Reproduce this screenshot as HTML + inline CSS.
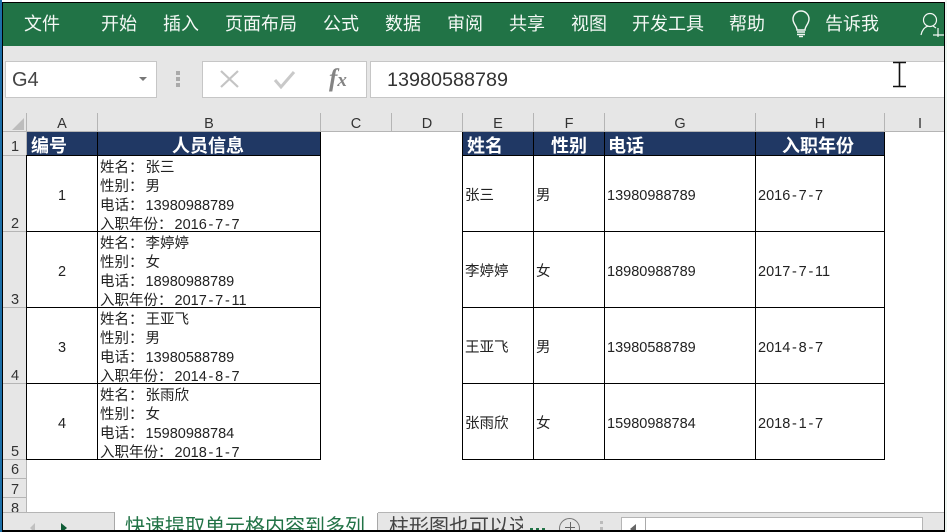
<!DOCTYPE html>
<html><head><meta charset="utf-8"><style>
html,body{margin:0;padding:0;background:#fff}
#p{position:relative;width:947px;height:532px;overflow:hidden;background:#fff;font-family:"Liberation Sans","Noto Sans CJK SC",sans-serif;color:#222}
.t{position:absolute;white-space:nowrap;line-height:20px}
.b{position:absolute}
.r{color:#f4f8f5;font-size:18px;top:13px;line-height:22px}
.h{color:#fff;font-size:18px;font-weight:bold;top:135px;line-height:22px}
.c{font-size:14.5px;line-height:19px;color:#222}
.c i{font-style:normal;padding:0 1.750px}
.c u{text-decoration:none;display:inline-block;width:2px;height:1px}
.l{position:absolute;background:#000}
.ch{font-size:14.5px;top:115px;line-height:18px;text-align:center;color:#333}
.rh{font-size:14.5px;left:4px;width:22px;text-align:center;line-height:18px;color:#333}
.g{position:absolute;background:#b5b5b5}
</style></head><body><div id="p">
<div class="b" style="left:0;top:0;width:947px;height:3px;background:#fff"></div>
<div class="b" style="left:3px;top:3px;width:941px;height:43px;background:#217346"></div>
<div class="b" style="left:3px;top:46px;width:941px;height:85px;background:#e6e6e6"></div>
<div class="t r" style="left:24px">文件</div>
<div class="t r" style="left:101px">开始</div>
<div class="t r" style="left:163px">插入</div>
<div class="t r" style="left:225px">页面布局</div>
<div class="t r" style="left:323px">公式</div>
<div class="t r" style="left:385px">数据</div>
<div class="t r" style="left:447px">审阅</div>
<div class="t r" style="left:509px">共享</div>
<div class="t r" style="left:571px">视图</div>
<div class="t r" style="left:632px">开发工具</div>
<div class="t r" style="left:729px">帮助</div>
<div class="t r" style="left:825px">告诉我</div>
<svg class="b" style="left:790px;top:10px" width="24" height="28" viewBox="0 0 24 28" fill="none" stroke="#f4f8f5" stroke-width="1.4"><path d="M7 20C7 16 3 14 3 9a8 8 0 0 1 16 0c0 5-4 7-4 11Z"/><path d="M7 22h8M7 24.500h8" /><path d="M9 26.500h4"/></svg>
<svg class="b" style="left:920px;top:11px" width="24" height="26" viewBox="0 0 24 26" fill="none" stroke="#f4f8f5" stroke-width="1.2"><circle cx="10" cy="9" r="6.500"/><path d="M1 24c1-5 4-8 7-9M13 15l3 2M18 17v11M13 24h11"/></svg>

<div class="b" style="left:5px;top:61px;width:150px;height:35px;background:#fff;border:1px solid #c6c6c6"></div>
<div class="t" style="left:12px;top:68px;font-size:20px;line-height:24px;color:#444">G4</div>
<div class="b" style="left:139px;top:77px;width:0;height:0;border:4px solid transparent;border-top:4px solid #777;border-bottom:0"></div>
<div class="b" style="left:176px;top:71px;width:4px;height:4px;background:#aaa"></div>
<div class="b" style="left:176px;top:77px;width:4px;height:4px;background:#aaa"></div>
<div class="b" style="left:176px;top:83px;width:4px;height:4px;background:#aaa"></div>
<div class="b" style="left:202px;top:61px;width:163px;height:35px;background:#fff;border:1px solid #c6c6c6"></div>
<svg class="b" style="left:218px;top:68px" width="24" height="22" fill="none" stroke="#c4c4c4" stroke-width="2.200"><path d="M3 3 20 19M20 3 3 19"/></svg>
<svg class="b" style="left:273px;top:70px" width="24" height="20" fill="none" stroke="#c9c9c9" stroke-width="3"><path d="M2 10l6 7L21 2"/></svg>
<div class="t" style="left:329px;top:66px;font-family:'Liberation Serif',serif;font-style:italic;font-weight:bold;font-size:25px;line-height:26px;color:#848484">f<span style="font-size:19px">x</span></div>
<div class="b" style="left:370px;top:61px;width:575px;height:35px;background:#fff;border-top:1px solid #c6c6c6;border-bottom:1px solid #c6c6c6;border-left:1px solid #c6c6c6"></div>
<div class="t" style="left:387px;top:68px;font-size:19.800px;line-height:24px;color:#333">13980588789</div>
<svg class="b" style="left:892px;top:61px" width="16" height="27" fill="none" stroke="#111" stroke-width="1.600"><path d="M1 1.500h13M1 25.500h13M7.500 2v23"/></svg>

<svg class="b" style="left:12px;top:117px" width="13" height="13"><path d="M12 1V13H0Z" fill="#bdbdbd"/></svg>
<div class="b" style="left:3px;top:131px;width:24px;height:381px;background:#e6e6e6"></div>
<div class="g" style="left:3px;top:131px;width:941px;height:1px"></div>
<div class="g" style="left:26px;top:113px;width:1px;height:399px"></div>
<div class="g" style="left:97px;top:113px;width:1px;height:18px"></div>
<div class="g" style="left:320px;top:113px;width:1px;height:18px"></div>
<div class="g" style="left:391px;top:113px;width:1px;height:18px"></div>
<div class="g" style="left:462px;top:113px;width:1px;height:18px"></div>
<div class="g" style="left:533px;top:113px;width:1px;height:18px"></div>
<div class="g" style="left:604px;top:113px;width:1px;height:18px"></div>
<div class="g" style="left:755px;top:113px;width:1px;height:18px"></div>
<div class="g" style="left:884px;top:113px;width:1px;height:18px"></div>
<div class="t ch" style="left:27px;width:70px">A</div>
<div class="t ch" style="left:98px;width:222px">B</div>
<div class="t ch" style="left:321px;width:70px">C</div>
<div class="t ch" style="left:392px;width:70px">D</div>
<div class="t ch" style="left:463px;width:70px">E</div>
<div class="t ch" style="left:534px;width:70px">F</div>
<div class="t ch" style="left:605px;width:150px">G</div>
<div class="t ch" style="left:756px;width:128px">H</div>
<div class="t ch" style="left:885px;width:70px">I</div>

<div class="g" style="left:3px;top:155px;width:24px;height:1px"></div>
<div class="g" style="left:3px;top:231px;width:24px;height:1px"></div>
<div class="g" style="left:3px;top:307px;width:24px;height:1px"></div>
<div class="g" style="left:3px;top:383px;width:24px;height:1px"></div>
<div class="g" style="left:3px;top:459px;width:24px;height:1px"></div>
<div class="g" style="left:3px;top:478px;width:24px;height:1px"></div>
<div class="g" style="left:3px;top:497px;width:24px;height:1px"></div>
<div class="t rh" style="top:138px">1</div>
<div class="t rh" style="top:215px">2</div>
<div class="t rh" style="top:291px">3</div>
<div class="t rh" style="top:367px">4</div>
<div class="t rh" style="top:443px">5</div>
<div class="t rh" style="top:461px">6</div>
<div class="t rh" style="top:481px">7</div>
<div class="t rh" style="top:500px">8</div>

<div class="b" style="left:27px;top:132px;width:293px;height:23px;background:#203864"></div>
<div class="b" style="left:463px;top:132px;width:421px;height:23px;background:#203864"></div>
<div class="l" style="left:27px;top:155px;width:294px;height:1px"></div>
<div class="l" style="left:27px;top:231px;width:294px;height:1px"></div>
<div class="l" style="left:27px;top:307px;width:294px;height:1px"></div>
<div class="l" style="left:27px;top:383px;width:294px;height:1px"></div>
<div class="l" style="left:27px;top:459px;width:294px;height:1px"></div>
<div class="l" style="left:97px;top:132px;width:1px;height:328px"></div>
<div class="l" style="left:320px;top:132px;width:1px;height:328px"></div>
<div class="l" style="left:26px;top:155px;width:1px;height:305px"></div>
<div class="l" style="left:462px;top:155px;width:423px;height:1px"></div>
<div class="l" style="left:462px;top:231px;width:423px;height:1px"></div>
<div class="l" style="left:462px;top:307px;width:423px;height:1px"></div>
<div class="l" style="left:462px;top:383px;width:423px;height:1px"></div>
<div class="l" style="left:462px;top:459px;width:423px;height:1px"></div>
<div class="l" style="left:462px;top:132px;width:1px;height:328px"></div>
<div class="l" style="left:533px;top:132px;width:1px;height:328px"></div>
<div class="l" style="left:604px;top:132px;width:1px;height:328px"></div>
<div class="l" style="left:755px;top:132px;width:1px;height:328px"></div>
<div class="l" style="left:884px;top:132px;width:1px;height:328px"></div>

<div class="t h" style="left:31px">编号</div>
<div class="t h" style="left:172px">人员信息</div>
<div class="t h" style="left:467px">姓名</div>
<div class="t h" style="left:551px">性别</div>
<div class="t h" style="left:608px">电话</div>
<div class="t h" style="left:782px">入职年份</div>

<div class="t c" style="left:27px;width:70px;text-align:center;top:187px">1</div>
<div class="t c" style="left:27px;width:70px;text-align:center;top:263px">2</div>
<div class="t c" style="left:27px;width:70px;text-align:center;top:339px">3</div>
<div class="t c" style="left:27px;width:70px;text-align:center;top:415px">4</div>

<div class="t c" style="left:100px;top:159px">姓名：<u></u>张三<br>性别：<u></u>男<br>电话：<u></u>13980988789<br>入职年份：<u></u>2016<i>-</i>7<i>-</i>7</div>
<div class="t c" style="left:100px;top:235px">姓名：<u></u>李婷婷<br>性别：<u></u>女<br>电话：<u></u>18980988789<br>入职年份：<u></u>2017<i>-</i>7<i>-</i>11</div>
<div class="t c" style="left:100px;top:311px">姓名：<u></u>王亚飞<br>性别：<u></u>男<br>电话：<u></u>13980588789<br>入职年份：<u></u>2014<i>-</i>8<i>-</i>7</div>
<div class="t c" style="left:100px;top:387px">姓名：<u></u>张雨欣<br>性别：<u></u>女<br>电话：<u></u>15980988784<br>入职年份：<u></u>2018<i>-</i>1<i>-</i>7</div>

<div class="t c" style="left:465px;top:187px">张三</div>
<div class="t c" style="left:536px;top:187px">男</div>
<div class="t c" style="left:607px;top:187px">13980988789</div>
<div class="t c" style="left:758px;top:187px">2016<i>-</i>7<i>-</i>7</div>
<div class="t c" style="left:465px;top:263px">李婷婷</div>
<div class="t c" style="left:536px;top:263px">女</div>
<div class="t c" style="left:607px;top:263px">18980988789</div>
<div class="t c" style="left:758px;top:263px">2017<i>-</i>7<i>-</i>11</div>
<div class="t c" style="left:465px;top:339px">王亚飞</div>
<div class="t c" style="left:536px;top:339px">男</div>
<div class="t c" style="left:607px;top:339px">13980588789</div>
<div class="t c" style="left:758px;top:339px">2014<i>-</i>8<i>-</i>7</div>
<div class="t c" style="left:465px;top:415px">张雨欣</div>
<div class="t c" style="left:536px;top:415px">女</div>
<div class="t c" style="left:607px;top:415px">15980988784</div>
<div class="t c" style="left:758px;top:415px">2018<i>-</i>1<i>-</i>7</div>

<div class="b" style="left:3px;top:512px;width:941px;height:18px;background:#e6e6e6;border-top:1px solid #b5b5b5;box-sizing:border-box"></div>
<div class="b" style="left:114px;top:512px;width:263px;height:18px;background:#fff;border-left:1px solid #a8a8a8"></div>
<div class="b" style="left:377px;top:513px;width:146px;height:17px;background:#e6e6e6;border-left:1px solid #a8a8a8"></div>
<div class="t" style="left:125px;top:514px;font-size:20px;line-height:26px;color:#217346">快速提取单元格内容到多列</div>
<div class="t" style="left:389px;top:514px;font-size:20px;line-height:26px;color:#444;width:134px;overflow:hidden">柱形图也可以这样</div>
<div class="b" style="left:530px;top:528px;width:3px;height:2px;background:#217346"></div>
<div class="b" style="left:536px;top:528px;width:3px;height:2px;background:#217346"></div>
<div class="b" style="left:542px;top:528px;width:3px;height:2px;background:#217346"></div>
<div class="b" style="left:30px;top:523px;width:0;height:0;border:5px solid transparent;border-right:5px solid #c0c0c0;border-left:0"></div>
<div class="b" style="left:61px;top:523px;width:0;height:0;border:5px solid transparent;border-left:6px solid #0f5c36;border-right:0"></div>
<div class="b" style="left:559px;top:518px;width:21px;height:21px;border:1px solid #777;border-radius:50%;box-sizing:border-box"></div>
<div class="b" style="left:565px;top:527px;width:10px;height:1px;background:#666"></div>
<div class="b" style="left:570px;top:522px;width:1px;height:10px;background:#666"></div>
<div class="b" style="left:600px;top:521px;width:3px;height:3px;background:#bbb"></div>
<div class="b" style="left:600px;top:527px;width:3px;height:3px;background:#bbb"></div>
<div class="b" style="left:621px;top:517px;width:300px;height:13px;background:#fff;border-left:1px solid #b5b5b5;border-top:1px solid #b5b5b5;border-right:1px solid #b5b5b5"></div>
<div class="b" style="left:645px;top:517px;width:1px;height:13px;background:#aaa"></div>
<div class="b" style="left:630px;top:524px;width:0;height:0;border:5px solid transparent;border-right:6px solid #666;border-left:0"></div>

<div class="b" style="left:0;top:0;width:2px;height:532px;background:#1d6fa8"></div>
<div class="b" style="left:2px;top:2px;width:943px;height:1px;background:#000"></div>
<div class="b" style="left:2px;top:2px;width:1px;height:529px;background:#000"></div>
<div class="b" style="left:944px;top:2px;width:1px;height:529px;background:#000"></div>
<div class="b" style="left:2px;top:530px;width:943px;height:2px;background:#000"></div>
<div class="b" style="left:945px;top:0;width:2px;height:532px;background:#eef5f1"></div>
</div></body></html>
